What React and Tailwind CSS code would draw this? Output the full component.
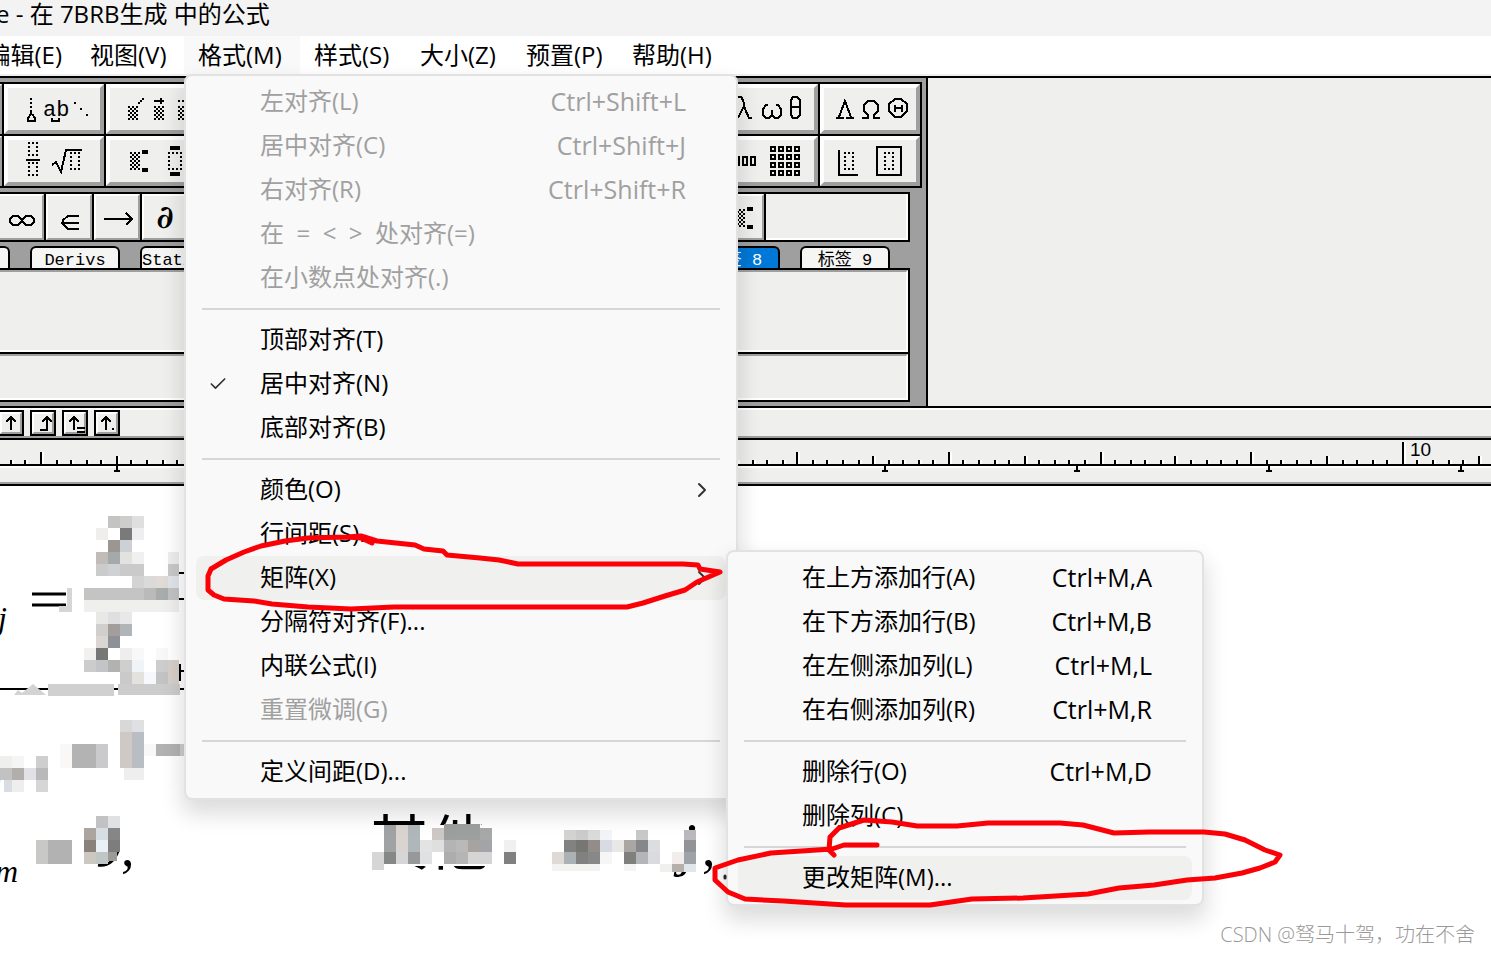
import React from "react";
import { Check, ChevronRight } from "lucide-react";

const formatMenu = [
  { label: "左对齐(L)", keys: "Ctrl+Shift+L", disabled: true },
  { label: "居中对齐(C)", keys: "Ctrl+Shift+J", disabled: true },
  { label: "右对齐(R)", keys: "Ctrl+Shift+R", disabled: true },
  { label: "在  =  <  >  处对齐(=)", disabled: true },
  { label: "在小数点处对齐(.)", disabled: true },
  null,
  { label: "顶部对齐(T)" },
  { label: "居中对齐(N)", checked: true },
  { label: "底部对齐(B)" },
  null,
  { label: "颜色(O)", arrow: true },
  { label: "行间距(S)..." },
  {
    label: "矩阵(X)",
    arrow: true,
    active: true,
    children: [
      { label: "在上方添加行(A)", keys: "Ctrl+M,A" },
      { label: "在下方添加行(B)", keys: "Ctrl+M,B" },
      { label: "在左侧添加列(L)", keys: "Ctrl+M,L" },
      { label: "在右侧添加列(R)", keys: "Ctrl+M,R" },
      null,
      { label: "删除行(O)", keys: "Ctrl+M,D" },
      { label: "删除列(C)" },
      null,
      { label: "更改矩阵(M)...", active: true },
    ],
  },
  { label: "分隔符对齐(F)..." },
  { label: "内联公式(I)" },
  { label: "重置微调(G)", disabled: true },
  null,
  { label: "定义间距(D)..." },
];

const tabs = ["Basic", "Derivs", "Statistics", "标签 4", "标签 5", "标签 6", "标签 7", "标签 8", "标签 9"];

// x, y, width, height, colour
const mosaic = [
  [108, 516, 12, 12, "#c4c4c5"], [120, 516, 12, 12, "#cdcdcb"], [132, 516, 12, 12, "#dfdfe0"],
  [96, 528, 12, 12, "#f0eeed"], [120, 528, 12, 12, "#7a7a7b"], [132, 528, 12, 12, "#eeeef0"],
  [108, 540, 12, 12, "#9b9691"], [120, 540, 12, 12, "#cdd1d5"],
  [96, 552, 12, 12, "#c2bcb9"], [108, 552, 12, 12, "#a4a9ac"], [120, 552, 12, 12, "#e2e3e1"], [132, 552, 12, 12, "#f0f0f0"], [168, 552, 11, 12, "#ededed"],
  [96, 564, 12, 12, "#cbcbcb"], [108, 564, 12, 12, "#d0d1d3"], [120, 564, 24, 12, "#cacacb"], [168, 564, 11, 12, "#c8c8c8"],
  [132, 576, 12, 12, "#d3d3d4"], [144, 576, 12, 12, "#dadada"], [156, 576, 12, 12, "#e0dbd7"], [168, 576, 11, 12, "#e0e4e8"],
  [84, 588, 60, 12, "#c4c4c4"], [144, 588, 12, 12, "#bababa"], [156, 588, 12, 12, "#a9acac"], [168, 588, 11, 12, "#c2c2c2"],
  [84, 600, 95, 12, "#efefee"],
  [67, 588, 5, 24, "#d6d6d6"], [59, 606, 8, 6, "#d6d6d6"],
  [96, 612, 12, 12, "#e8e8e7"], [108, 612, 12, 12, "#dfdfe1"], [120, 612, 12, 12, "#e8e8e8"],
  [96, 624, 12, 12, "#d0cfce"], [108, 624, 12, 12, "#a39e9b"], [120, 624, 12, 12, "#b0b5b7"],
  [96, 636, 12, 12, "#d9d6d3"], [108, 636, 12, 12, "#8e9296"],
  [84, 648, 12, 12, "#f2f1f0"], [96, 648, 12, 12, "#777778"], [120, 648, 12, 12, "#eeeeef"], [132, 648, 12, 12, "#f8f8f8"], [156, 648, 12, 12, "#f8f8f8"],
  [84, 660, 12, 12, "#cccccc"], [96, 660, 12, 12, "#c3c4c8"], [108, 660, 12, 12, "#b2b2b1"], [120, 660, 12, 12, "#cfcfcf"], [132, 660, 12, 12, "#f0f3f7"], [156, 660, 12, 12, "#cdcdcd"], [168, 660, 11, 12, "#d6cfc9"],
  [120, 672, 12, 12, "#cacaca"], [132, 672, 12, 12, "#e4e2df"], [144, 672, 12, 12, "#f6f8fe"], [156, 672, 12, 12, "#c3c3c3"], [168, 672, 11, 12, "#d6d0c9"],
  [48, 684, 66, 12, "#d0d0d0"], [118, 684, 62, 11, "#cccccc"],
  [120, 720, 12, 12, "#d9d8d8"], [132, 720, 12, 12, "#dfe0e2"],
  [120, 732, 12, 36, "#cfc9c5"], [132, 732, 12, 36, "#b8bec3"], [124, 768, 20, 12, "#eeeeee"],
  [60, 744, 12, 24, "#f9f8f6"], [72, 744, 24, 24, "#b3b3b3"], [96, 744, 12, 24, "#cacacd"],
  [144, 744, 12, 12, "#f8f8f8"], [156, 744, 24, 12, "#b2b2b2"], [180, 744, 6, 12, "#cccccc"],
  [0, 756, 12, 12, "#efefed"], [12, 756, 12, 12, "#f5f5f5"], [36, 756, 12, 12, "#cecece"],
  [0, 768, 12, 12, "#c2c2c2"], [12, 768, 12, 12, "#b1aeab"], [24, 768, 12, 12, "#e0e2e6"], [36, 768, 12, 12, "#b9b9b9"],
  [4, 780, 8, 12, "#d9dde1"], [12, 780, 12, 12, "#eeeeee"], [36, 780, 12, 12, "#d6d6d6"],
  [96, 816, 12, 12, "#c2c2c4"], [108, 816, 12, 12, "#e0e1e3"],
  [84, 828, 12, 12, "#aca59f"], [96, 828, 12, 12, "#d8dde2"], [108, 828, 12, 12, "#868686"],
  [84, 840, 12, 12, "#89817c"], [96, 840, 12, 12, "#eaf1f6"], [108, 840, 12, 12, "#7d7d7d"],
  [84, 852, 12, 12, "#cbc8c1"], [96, 852, 12, 12, "#c0c6c6"], [108, 852, 9, 9, "#9c9b98"],
  [36, 840, 12, 24, "#c8c8c7"], [48, 840, 24, 24, "#b2b2b2"],
  [370, 825, 150, 41, "#ffffff"], [672, 832, 22, 40, "#ffffff"],
  [384, 825, 12, 27, "#a0a2a3"], [396, 825, 12, 27, "#d9d4d0"], [408, 825, 12, 27, "#b0b7bb"],
  [432, 828, 12, 12, "#cdc8c5"], [444, 824, 12, 16, "#9c9ea0"], [456, 824, 24, 16, "#9e9f9f"], [480, 828, 12, 12, "#a8a8a8"],
  [420, 840, 12, 12, "#e2e3e3"], [432, 840, 12, 12, "#dfdfdf"], [444, 840, 12, 12, "#b4b4b4"], [456, 840, 12, 12, "#b9b9b9"], [468, 840, 12, 12, "#a7a3a1"], [480, 840, 12, 12, "#a2a4a7"], [504, 840, 12, 12, "#f0f0ee"],
  [372, 852, 12, 18, "#d6d6d6"], [384, 852, 12, 12, "#868887"], [384, 864, 12, 8, "#ffffff"], [396, 852, 12, 12, "#d6d6d6"], [408, 852, 12, 12, "#979899"], [420, 852, 12, 12, "#dfe2e2"], [444, 852, 12, 12, "#adadad"], [456, 852, 12, 12, "#b5b5b5"], [468, 852, 24, 12, "#d5d5d6"], [504, 852, 12, 12, "#808080"],
  [564, 830, 12, 10, "#d3d3d3"], [576, 830, 12, 10, "#cbcbcb"], [588, 830, 12, 10, "#dadada"], [600, 830, 12, 10, "#f3f4f7"], [636, 830, 12, 10, "#c8c8c8"], [684, 830, 12, 10, "#bbb9bd"],
  [564, 840, 12, 12, "#828280"], [576, 840, 12, 12, "#767675"], [588, 840, 12, 12, "#948c88"], [600, 840, 12, 12, "#d8dbe4"], [612, 840, 12, 12, "#eae8e6"], [624, 840, 12, 12, "#aaa6a4"], [636, 840, 12, 12, "#85878a"], [648, 840, 12, 12, "#dcdde0"], [684, 840, 12, 12, "#939497"],
  [552, 852, 12, 12, "#dfdad6"], [564, 852, 12, 12, "#aab2b5"], [576, 852, 12, 12, "#808180"], [588, 852, 12, 12, "#888888"], [600, 852, 12, 12, "#f6f6f6"], [624, 852, 12, 12, "#7f7f7e"], [636, 852, 12, 12, "#b3b6b6"], [648, 852, 12, 12, "#dadbde"], [672, 852, 12, 12, "#f2ecea"], [684, 852, 12, 12, "#9da3a8"],
  [552, 864, 48, 7, "#f3f3f2"], [624, 864, 12, 7, "#f4f4f3"], [660, 864, 12, 8, "#f0f0ee"], [672, 864, 12, 8, "#b6b0ac"], [684, 864, 12, 8, "#e0e6ea"],
];

// ---------------- ICON PIECES ----------------
function Dotted({ x, y, w, h }) {
  return (
    <g>
      <path
        d={`M${x} ${y + 1}h${w}M${x} ${y + h - 1}h${w}M${x + 1} ${y}v${h}M${x + w - 1} ${y}v${h}`}
        stroke="#000"
        strokeWidth="2"
        strokeDasharray="2 2"
      />
    </g>
  );
}

function Shade({ x, y, w, h }) {
  const dots = [];
  for (let r = 0; r < h / 2; r++)
    for (let c = r % 2; c < w / 2; c += 2)
      dots.push(<rect key={`${r}-${c}`} x={x + c * 2} y={y + r * 2} width="2" height="2" />);
  return <g>{dots}</g>;
}

function Icon({ children, small }) {
  return (
    <svg
      className={small ? "w-11 h-[42px] shrink-0" : "w-[92px] h-[42px] shrink-0"}
      shapeRendering="crispEdges"
      aria-hidden="true"
    >
      {children}
    </svg>
  );
}

const row1 = {
  1: (
    <Icon>
      <path d="M22 10h2v2h-2zM22 14h2v2h-2zM22 18h2v2h-2z" />
      <path d="M23 22v4l-3 4v3h7v-3l-3-4" fill="none" stroke="#000" strokeWidth="2" />
      <text x="35" y="28" className="font-['Liberation_Mono',monospace] text-[22px]">ab</text>
      <path d="M44 30v3h7v-3" fill="none" stroke="#000" strokeWidth="2" />
      <path d="M66 14h2v2h-2zM72 20h2v2h-2zM78 26h2v2h-2z" />
    </Icon>
  ),
  2: (
    <Icon>
      <Shade x={18} y={18} w={10} h={14} />
      <path d="M28 14h2v2h-2zM30 12h2v2h-2zM32 10h2v2h-2z" />
      <Shade x={44} y={18} w={10} h={14} />
      <path d="M44 12h10v2h-10zM50 10h2v6h-2z" />
      <Shade x={68} y={18} w={10} h={14} />
      <path d="M68 12h2v2h-2zM72 12h2v2h-2z" />
    </Icon>
  ),
  // lowercase greek, two-pixel strokes
  8: (
    <Icon>
      <path d="M16 9h3l2 3l2 9l4 9h3M22 18l-6 12" fill="none" stroke="#000" strokeWidth="2" />
      <path d="M46 17h-2l-3 4v6l3 3h3l3-3v-5v5l3 3h3l3-3v-6l-3-4h-2" fill="none" stroke="#000" strokeWidth="2" />
      <path d="M71 9h4l3 3v15l-3 3h-4l-2-3v-15zM69 19h9" fill="none" stroke="#000" strokeWidth="2" />
    </Icon>
  ),
  // uppercase greek
  9: (
    <Icon>
      <path d="M12 30h8M22 30h8M15 29l6-16l6 16M21 12v4" fill="none" stroke="#000" strokeWidth="2" />
      <path d="M38 30h6v-3l-4-4v-6l4-4h6l4 4v6l-4 4v3h6" fill="none" stroke="#000" strokeWidth="2" />
      <path d="M71 11h6l6 5v7l-6 6h-6l-6-6v-7zM71 17v7M78 17v7M71 20h7" fill="none" stroke="#000" strokeWidth="2" />
    </Icon>
  ),
};

const row2 = {
  1: (
    <Icon>
      <Dotted x={20} y={2} w={10} h={14} />
      <rect x="18" y="19" width="14" height="2" />
      <Dotted x={20} y={22} w={10} h={14} />
      <path d="M44 25l4-3l5 10l5-22h16" fill="none" stroke="#000" strokeWidth="2" />
      <Dotted x={62} y={12} w={10} h={18} />
    </Icon>
  ),
  2: (
    <Icon>
      <Shade x={20} y={12} w={10} h={18} />
      <path d="M32 10h6v4h-6zM32 28h6v4h-6z" />
      <Dotted x={58} y={12} w={14} h={18} />
      <path d="M60 6h10v4h-10zM60 32h10v4h-10z" />
    </Icon>
  ),
  8: (
    <Icon>
      <path d="M13 17h4v8h-4zM21 17h4v8h-4zM29 17h4v8h-4z" fill="none" stroke="#000" strokeWidth="2" />
      {[0, 1, 2, 3].map((r) =>
        [0, 1, 2, 3].map((c) => (
          <rect key={`${r}${c}`} x={49 + c * 8} y={7 + r * 8} width="4" height="4" fill="none" stroke="#000" strokeWidth="2" />
        ))
      )}
    </Icon>
  ),
  9: (
    <Icon>
      <path d="M15 10v25h19" fill="none" stroke="#000" strokeWidth="2" />
      <Dotted x={20} y={12} w={10} h={18} />
      <rect x="53" y="7" width="24" height="28" fill="none" stroke="#000" strokeWidth="2" />
      <Dotted x={60} y={12} w={10} h={18} />
    </Icon>
  ),
};

const row3 = {
  0: (
    <Icon small>
      <path d="M14 20h5l8 9h5l3-3v-3l-3-3h-5l-8 9h-5l-3-3v-3z" fill="none" stroke="#000" strokeWidth="2" />
    </Icon>
  ),
  1: (
    <Icon small>
      <path d="M32 20h-11l-5 4v4l5 5h11M14 27h18" fill="none" stroke="#000" strokeWidth="2" />
    </Icon>
  ),
  2: (
    <Icon small>
      <path d="M9 23h29M31 17l6 6l-6 6" fill="none" stroke="#000" strokeWidth="2" />
    </Icon>
  ),
  3: <span className="font-['DejaVu_Serif',serif] text-[32px] font-bold leading-none">∂</span>,
  15: (
    <Icon small>
      <Shade x={16} y={13} w={10} h={18} />
      <path d="M28 11h6v4h-6zM28 29h6v4h-6z" />
    </Icon>
  ),
};

const nudge = [
  { name: "上标", d: "M11 5v13M6 10l5-5l5 5" },
  { name: "换行", d: "M15 5v13h-7M10 10l5-5l5 5" },
  { name: "对齐等号", d: "M10 5v13M5 10l5-5l5 5M13 16h8M13 20h8" },
  { name: "对齐小数点", d: "M10 5v13M5 10l5-5l5 5M16 17h2" },
];

// ---------------- MENUS ----------------
function Menu({ items, className }) {
  return (
    <div
      role="menu"
      className={`absolute z-10 rounded-lg border-2 border-[#e2e2e2] bg-[#f9f9f9] py-1 shadow-[0_12px_22px_2px_rgba(0,0,0,0.14)] ${className}`}
    >
      {items.map((item, i) =>
        item === null ? (
          <div key={i} role="separator" className="mx-4 my-2 h-0.5 bg-[#d6d6d6]" />
        ) : (
          <div key={i} className="relative mx-2.5">
            <button
              role="menuitem"
              disabled={item.disabled}
              className={`flex h-11 w-full items-center rounded-lg pr-10 pb-0.5 text-left ${
                item.active ? "bg-[#f0f0ee]" : ""
              } ${item.disabled ? "text-[#a0a0a0]" : "text-black"}`}
            >
              <span className="w-16 shrink-0 pl-3">
                {item.checked && <Check size={20} strokeWidth={2} color="#333" className="mt-0.5" />}
              </span>
              <span className="flex-1 whitespace-pre">{item.label}</span>
              <span className="text-[25px]">{item.keys}</span>
              {item.arrow && <ChevronRight size={24} strokeWidth={2} color="#333" className="mt-0.5 -mr-7" />}
            </button>
            {item.children && <Menu items={item.children} className="left-full -top-1.5 w-[478px]" />}
          </div>
        )
      )}
    </div>
  );
}

function MenuBar() {
  const rest = ["样式(S)", "大小(Z)", "预置(P)", "帮助(H)"];
  return (
    <nav className="flex h-[38px] bg-white">
      <button className="flex w-[76px] items-center justify-end whitespace-nowrap pr-3.5">编辑(E)</button>
      <button className="w-[108px] pl-3.5 text-left">视图(V)</button>
      <div className="relative w-[116px]">
        <button className="h-full w-full bg-[#f9f9f9] pl-3.5 text-left">格式(M)</button>
        <Menu items={formatMenu} className="left-0 top-full w-[554px]" />
      </div>
      {rest.map((t) => (
        <button key={t} className="w-[106px] pl-3.5 text-left">
          {t}
        </button>
      ))}
    </nav>
  );
}

// ---------------- TOOLBAR ----------------
function PaletteRow({ icons }) {
  return (
    <div className="-ml-[98px] flex border-b-2 border-black">
      {Array.from({ length: 10 }, (_, i) => (
        <div key={i} className="w-[102px] shrink-0 border-r-2 border-black">
          <button
            aria-label={`模板 ${i + 1}`}
            className="flex h-[50px] w-full items-center justify-center overflow-hidden border-4 border-t-white border-l-white border-r-[#9f9f9f] border-b-[#9f9f9f] bg-[#efefee]"
          >
            {icons[i]}
          </button>
        </div>
      ))}
    </div>
  );
}

function Palettes() {
  return (
    <section className="w-[928px] border-r-2 border-black bg-[#9f9f9f] py-1">
      <div className="w-[922px] border-t-2 border-black">
        <PaletteRow icons={row1} />
        <PaletteRow icons={row2} />
      </div>

      <div className="mt-1 flex w-[910px] border-2 border-l-0 border-black bg-[#efefee]">
        <div className="-ml-0.5 flex">
          {Array.from({ length: 16 }, (_, i) => (
            <div key={i} className="w-12 shrink-0 border-r-2 border-black">
              <button
                aria-label={`符号 ${i + 1}`}
                className="flex h-[46px] w-full items-center justify-center overflow-hidden border-2 border-t-white border-l-white border-r-[#9f9f9f] border-b-[#9f9f9f]"
              >
                {row3[i]}
              </button>
            </div>
          ))}
        </div>
        <div className="flex-1 border-r-2 border-b-2 border-white" />
      </div>

      <div className="mt-1 -ml-20 flex gap-5">
        {tabs.map((t) => (
          <button
            key={t}
            className={`flex h-[22px] w-[90px] shrink-0 items-center justify-center-safe overflow-hidden rounded-t-md border-2 border-b-0 border-black pt-1 font-['Liberation_Mono','Noto_Sans_CJK_SC',monospace] text-[17px] leading-none whitespace-nowrap ${
              t === "标签 8" ? "bg-[#0078d7] text-white" : "bg-[#f5f5f4] text-black"
            }`}
          >
            {t}
          </button>
        ))}
      </div>

      <div className="w-[910px] border-2 border-l-0 border-black">
        <div className="h-[82px] border-2 border-l-0 border-white border-t-[#9f9f9f] bg-[#efefee]" />
        <div className="h-12 border-t-2 border-black">
          <div className="h-[46px] border-2 border-l-0 border-white border-t-[#9f9f9f] bg-[#efefee]" />
        </div>
      </div>
    </section>
  );
}

function Nudges() {
  return (
    <div className="border-t-2 border-b-2 border-black">
      <div className="-ml-0.5 flex h-[30px] gap-1.5 border-t-2 border-b-2 border-t-white border-b-[#9f9f9f]">
        {nudge.map((n) => (
          <button
            key={n.name}
            aria-label={n.name}
            className="size-[26px] border-2 border-black"
          >
            <span className="block size-[22px] border-2 border-t-white border-l-white border-r-[#9f9f9f] border-b-[#9f9f9f]">
              <svg className="-mt-0.5 -ml-0.5 size-[22px]" shapeRendering="crispEdges" aria-hidden="true">
                <path d={n.d} fill="none" stroke="#000" strokeWidth="2" />
              </svg>
            </span>
          </button>
        ))}
      </div>
    </div>
  );
}

function Ruler() {
  const ticks = [];
  for (let i = -2; i < 98; i++) {
    const x = Math.floor((41 + i * 15.13) / 2) * 2;
    const h = i === 90 ? 22 : i % 10 === 0 ? 12 : i % 5 === 0 ? 8 : 4;
    ticks.push({ x, h });
  }
  const stops = [0, 1, 2, 3, 4, 5, 6, 7].map((i) => 116 + i * 192);
  return (
    <svg className="block h-[46px] w-full border-b-2 border-black bg-[#efefee]" shapeRendering="crispEdges">
      <rect y="26" width="100%" height="2" fill="#fff" />
      {ticks.map((t) => (
        <g key={t.x}>
          <rect x={t.x + 2} y={24 - t.h} width="2" height={t.h} fill="#fff" />
          <rect x={t.x} y={24 - t.h} width="2" height={t.h} />
        </g>
      ))}
      <rect y="24" width="100%" height="2" />
      {stops.map((x) => (
        <path key={x} d={`M${x} 26h2v4h2v2h-6v-2h2z`} />
      ))}
      <text x="1410" y="16" className="font-['Liberation_Sans',sans-serif] text-[19px]">10</text>
      <rect y="42" width="100%" height="2" fill="#9f9f9f" />
    </svg>
  );
}

// ---------------- EQUATION ----------------
function Equation() {
  const serif = "font-['Liberation_Serif','Noto_Sans_CJK_SC',serif]";
  return (
    <svg className="absolute inset-0 h-full w-full" aria-hidden="true">
      <g transform="translate(0 -486)">
        <text x="-2" y="629" className={`${serif} text-[32px] italic`}>j</text>
        <path d="M32 594h34M32 605h34" stroke="#000" strokeWidth="3" />
        <path d="M0 689h184M178 573h6M178 599h6M180 664v17M178 671h6" stroke="#000" strokeWidth="2" />
        <text x="-5" y="882" className={`${serif} text-[32px] italic`}>m</text>
        <text x="-6" y="788" className={`${serif} text-[32px] italic`}>j</text>
        <text x="121" y="866" className={`${serif} text-[54px]`}>,</text>
        <text x="369" y="865" className={`${serif} text-[60px]`}>其他</text>
        <text x="680" y="864" className={`${serif} text-[60px] italic`}>j</text>
        <text x="702" y="866" className={`${serif} text-[54px]`}>,</text>
        <path d="M98 865q14 2 20-14" fill="none" stroke="#000" strokeWidth="3" />
        {mosaic.map(([x, y, w, h, fill], i) => (
          <rect key={i} x={x} y={y} width={w} height={h} fill={fill} shapeRendering="crispEdges" />
        ))}
        <path d="M14 695l4-5l4 3l11-9l13 11z" fill="#d3d3d3" />
      </g>
    </svg>
  );
}

// hand-drawn red marker loops
function Marker() {
  return (
    <svg
      className="pointer-events-none absolute inset-0 z-20 h-full w-full"
      fill="none"
      stroke="#fb0007"
      strokeWidth="5"
      strokeLinejoin="round"
      strokeLinecap="round"
      aria-hidden="true"
    >
      <path d="M372 543L361 538L347 537L308 538L285 541L261 546L244 552L226 560L211 569L208 576V590L214 595L224 599L254 601L272 604L308 607L351 609L394 607H627L643 603L665 596L685 590L697 582L720 572L700 569L698 565L683 564H518L499 560L480 558L447 555L443 551L424 549L415 545L377 541L361 536L347 537" />
      <path d="M877 845H844L832 849L771 853L738 860L715 868V880L728 892L745 899L783 901L846 905H930L972 899L1023 898L1088 894L1119 888L1154 885L1187 880L1215 878L1242 873L1260 868L1275 862L1280 855L1265 850L1245 840L1225 834L1204 832L1149 832L1114 833L1083 825L1060 823H988L957 826H917L892 822L864 820L839 828L830 837L829 850L834 855" />
      <path d="M725 876v2" stroke="#222" strokeWidth="3" />
    </svg>
  );
}

export default function App() {
  return (
    <div className="relative flex min-h-screen flex-col overflow-hidden bg-[#efefee] font-['Open_Sans','Noto_Sans_CJK_SC',sans-serif] text-[24px] leading-none text-black">
      <header className="-ml-1 flex h-9 items-center bg-[#f3f3f3] pb-2 whitespace-pre">
        <h1>e - 在 7BRB生成 中的公式</h1>
      </header>
      <MenuBar />
      <div className="mt-0.5 border-t-2 border-black">
        <Palettes />
      </div>
      <Nudges />
      <Ruler />
      <main className="relative flex-1 bg-white">
        <Equation />
        <p className="absolute right-4 bottom-2 text-[20px] font-light text-[#999]">
          CSDN @驽马十驾，功在不舍
        </p>
      </main>
      <Marker />
    </div>
  );
}
